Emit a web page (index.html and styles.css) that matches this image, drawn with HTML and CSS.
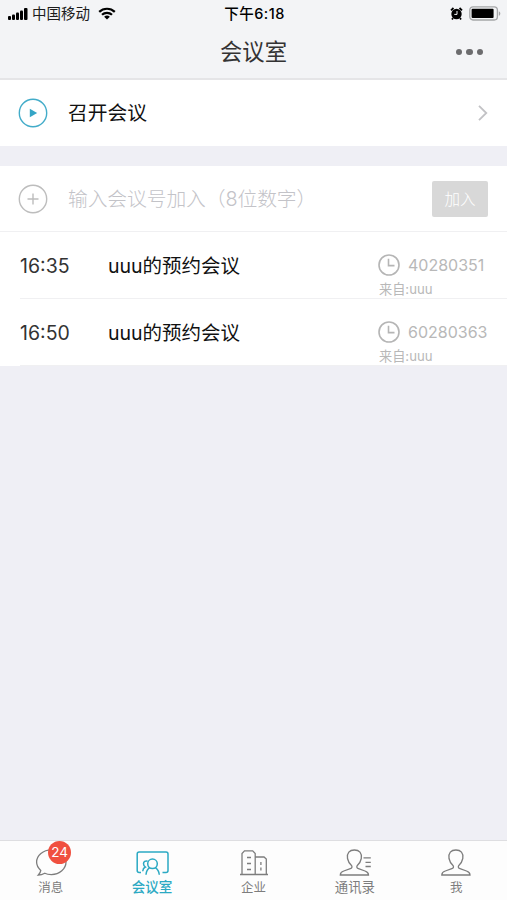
FILE: index.html
```html
<!DOCTYPE html>
<html lang="zh-CN">
<head>
  <meta charset="UTF-8">
  <meta name="viewport" content="width=device-width, initial-scale=1">
  <title>会议室</title>
  <link rel="stylesheet" href="styles.css">
</head>
<body>

<header>
  <div class="status-bar">
    <div class="carrier">
      <svg class="signal" width="20" height="12" viewBox="0 0 20 12">
        <rect x="0" y="8" width="3" height="4" rx="1"/>
        <rect x="4" y="6.5" width="3" height="5.5" rx="1"/>
        <rect x="8" y="4.5" width="3" height="7.5" rx="1"/>
        <rect x="12" y="2.5" width="3" height="9.5" rx="1"/>
        <rect x="16" y="0" width="3.5" height="12" rx="1"/>
      </svg>
      <span>中国移动</span>
      <svg class="wifi" width="18" height="13" viewBox="0 0 18 13">
        <path d="M1.2 4.9a11.2 11.2 0 0 1 15.6 0M4 7.8a7.2 7.2 0 0 1 10 0" fill="none" stroke="#000" stroke-width="2.2"/>
        <path d="M9 12.6L6.1 9.8a4.2 4.2 0 0 1 5.8 0z"/>
      </svg>
    </div>
    <div class="clock">下午6:18</div>
    <div class="power">
      <svg width="13" height="13" viewBox="0 0 13 13">
        <circle cx="6.5" cy="7" r="5.2"/>
        <path d="M1 3.4L3.5 1M12 3.4L9.5 1M3 11l-1 1.4M10 11l1 1.4" stroke="#000" stroke-width="1.8"/>
        <path d="M7 4v3.4H4.3" fill="none" stroke="#f3f4f6" stroke-width="1"/>
      </svg>
      <svg width="32" height="15" viewBox="0 0 32 15">
        <rect x=".8" y=".8" width="27.6" height="13.2" rx="3.2" fill="none" stroke="#a5a6a8" stroke-width="1.3"/>
        <rect x="2.6" y="2.7" width="22" height="9.4" rx="1"/>
        <path d="M29.800 5.2c2 .8 2 3.800 0 4.600z" fill="#a5a6a8"/>
      </svg>
    </div>
  </div>
  <div class="nav">
    <h1>会议室</h1>
    <div class="more"><i></i><i></i><i></i></div>
  </div>
</header>

<main>
  <div class="row start">
    <svg class="row-icon" width="30" height="30" viewBox="0 0 30 30">
      <circle cx="15" cy="15" r="13.7" fill="none" stroke="#43acc9" stroke-width="1.4"/>
      <path d="M11.8 10.7l7.4 4.2-7.4 4.3z" fill="#35a5c6"/>
    </svg>
    <span class="row-title">召开会议</span>
    <svg class="arrow" width="12" height="18" viewBox="0 0 12 18">
      <path d="M2 1.8L9.3 9 2 16.2" fill="none" stroke="#c2c2c5" stroke-width="1.8"/>
    </svg>
  </div>

  <div class="row join">
    <svg class="row-icon" width="30" height="30" viewBox="0 0 30 30">
      <g fill="none" stroke="#bdbdbd" stroke-width="1.4">
        <circle cx="15" cy="15" r="13.7"/>
        <path d="M9.5 15h11M15 9.5v11"/>
      </g>
    </svg>
    <span class="placeholder">输入会议号加入（8位数字）</span>
    <button class="join-btn">加入</button>
  </div>

  <div class="meeting-list">
    <div class="meeting">
      <span class="time">16:35</span>
      <span class="name">uuu的预约会议</span>
      <div class="info">
        <div class="number">
          <svg width="22" height="22" viewBox="0 0 22 22">
            <circle cx="11" cy="11" r="10"/>
            <path d="M10.5 4.8v6.8h6"/>
          </svg>
          <span>40280351</span>
        </div>
        <div class="from">来自:uuu</div>
      </div>
    </div>
    <div class="meeting">
      <span class="time">16:50</span>
      <span class="name">uuu的预约会议</span>
      <div class="info">
        <div class="number">
          <svg width="22" height="22" viewBox="0 0 22 22">
            <circle cx="11" cy="11" r="10"/>
            <path d="M10.5 4.8v6.8h6"/>
          </svg>
          <span>60280363</span>
        </div>
        <div class="from">来自:uuu</div>
      </div>
    </div>
  </div>
</main>

<nav class="tabs">
  <div class="tab">
    <svg width="36" height="30" viewBox="0 0 36 30">
      <path d="M7.8 23.4C4.9 20.9 3.6 18.2 3.6 15.1C3.6 8.4 10.1 2.8 18.4 2.8S33 8.4 33 15.1S26.7 27.6 18.4 27.6C15.9 27.6 13.6 27.2 11.8 26.2C9.8 27.3 7.6 28 5.3 28C6.8 26.6 7.6 25.2 7.8 23.4z"/>
    </svg>
    <span>消息</span>
    <b class="badge">24</b>
  </div>
  <div class="tab active">
    <svg width="36" height="30" viewBox="0 0 36 30">
      <path d="M7 25.6H5.200Q3.200 25.600 3.200 23.600V7Q3.200 5 5.200 5H32Q34 5 34 7V23.600Q34 25.600 32 25.600H28.500"/>
      <circle cx="18.5" cy="16.8" r="4.8"/>
      <path d="M12 27.700C12.200 24.700 13.300 22.300 15.600 20.700M21.400 20.700C23.800 22.300 25 24.700 25.300 27.700M13.600 14.200C11.300 13.500 9.500 14.800 9.500 16.800C9.500 18.300 10.200 19.200 11.400 20C9.600 20.800 8.900 22 8.700 24.200"/>
    </svg>
    <span>会议室</span>
  </div>
  <div class="tab">
    <svg width="36" height="30" viewBox="0 0 36 30">
      <path d="M4 27.5H32M6 27.5V6.5L8.500 3.800H16.700L19.200 6.500V27.500M19.200 10H28L30.300 12V27.500M11 10.500h4M11 16.500h4M11 22.500h4M24.900 15v3M24.900 20.500v3"/>
    </svg>
    <span>企业</span>
  </div>
  <div class="tab">
    <svg width="36" height="30" viewBox="0 0 36 30">
      <path d="M14.7 18.8C11.6 16 10.9 13.5 10.5 11.5C9.7 6 12.5 3 17.4 3S25.1 6 24.3 11.5C23.9 13.5 23.2 16 20.1 18.8C19.4 20.2 20.1 21.2 21.5 21.7L28 24Q31.5 25.2 31.5 28H3.3Q3.3 25.2 6.8 24L13.3 21.7C14.7 21.2 15.4 20.2 14.7 18.8z"/>
      <path d="M26.5 10.8h7.3M28.5 15.3h5.3M28.5 19.5h5.3"/>
    </svg>
    <span>通讯录</span>
  </div>
  <div class="tab">
    <svg width="36" height="30" viewBox="0 0 36 30">
      <path d="M15.2 18.8C12.1 16 11.4 13.5 11 11.5C10.2 6 13 3 17.9 3S25.6 6 24.8 11.5C24.4 13.5 23.7 16 20.6 18.8C19.9 20.2 20.6 21.2 22 21.7L28.5 24Q32 25.2 32 28H3.8Q3.8 25.2 7.3 24L13.8 21.7C15.2 21.2 15.9 20.2 15.2 18.8z"/>
    </svg>
    <span>我</span>
  </div>
</nav>

</body>
</html>
```
FILE: styles.css
```css
* {
  box-sizing: border-box;
}

body {
  margin: 0;
  height: 100vh;
  display: flex;
  flex-direction: column;
  overflow: hidden;
  background: #efeff5;
  color: #1c1c1c;
  font-family: Inter, "Noto Sans CJK SC", sans-serif;
}

svg {
  display: block;
  flex: none;
}

/* Header */
header {
  height: 80px;
  background: #f3f4f6;
  border-bottom: 2px solid #e5e5e7;
}

.status-bar {
  height: 26px;
  padding: 0 6px 0 8px;
  display: grid;
  grid-template-columns: 1fr auto 1fr;
  align-items: center;
  font-size: 14.5px;
  line-height: 26px;
}

.carrier {
  display: flex;
  align-items: center;
}

.carrier span {
  margin: 0 8px 0 4px;
  padding-top: 1px;
}

.clock {
  padding-top: 1px;
  font-size: 14.5px;
  font-weight: 500;
  letter-spacing: 0.5px;
  color: #000;
}

.power {
  display: flex;
  justify-content: flex-end;
  align-items: center;
  gap: 6px;
}

.nav {
  height: 52px;
  padding: 0 24px;
  display: grid;
  grid-template-columns: 1fr auto 1fr;
  align-items: center;
}

.nav h1 {
  grid-column: 2;
  margin: 0;
  font-size: 22.3px;
  font-weight: 400;
  line-height: 52px;
  color: #333;
}

.more {
  display: flex;
  justify-content: flex-end;
  gap: 4px;
}

.more i {
  width: 6.5px;
  height: 6.5px;
  border-radius: 50%;
  background: #6c6c6e;
}

/* Rows */
main {
  flex: 1;
}

.row {
  height: 66px;
  padding: 0 18px;
  display: flex;
  align-items: center;
  background: #fff;
}

.row-title,
.placeholder {
  flex: 1;
  margin-left: 20px;
  padding-bottom: 3px;
  font-size: 19.8px;
}

.row-title {
  color: #111;
}

.placeholder {
  color: #c3c3c8;
  font-weight: 300;
  letter-spacing: -0.1px;
}

.join {
  margin-top: 20px;
  padding-right: 19px;
  border-bottom: 1px solid #f0f0f2;
}

.join-btn {
  width: 56px;
  height: 36px;
  padding: 0 0 2px;
  border: 0;
  border-radius: 2px;
  background: #d8d8d8;
  color: #fff;
  font: 300 15.5px Inter, "Noto Sans CJK SC", sans-serif;
}

/* Meetings */
.meeting-list {
  background: #fff;
}

.meeting {
  height: 67px;
  margin-left: 20px;
  display: flex;
  align-items: center;
  border-bottom: 1px solid #f0f0f2;
}

.time {
  width: 88px;
  padding-top: 2px;
  font-size: 19.5px;
  color: #333;
}

.name {
  flex: 1;
  padding-bottom: 2px;
  font-size: 19.5px;
  color: #111;
}

.info {
  width: 129px;
  align-self: flex-end;
  color: #b8b8b8;
}

.number {
  height: 22px;
  display: flex;
  align-items: center;
  gap: 8px;
  font-size: 16px;
}

.number svg {
  fill: none;
  stroke: #b5b5b5;
  stroke-width: 1.6;
}

.from {
  height: 22px;
  padding-left: 1px;
  font-size: 13.2px;
  line-height: 26px;
}

/* Tab bar */
.tabs {
  height: 60px;
  display: flex;
  background: #fdfdfd;
  border-top: 1px solid #dedee1;
}

.tab {
  flex: 1;
  position: relative;
  display: flex;
  flex-direction: column;
  align-items: center;
  padding-top: 6px;
  font-size: 12.5px;
  line-height: 21px;
  color: #7d7d7d;
}

.tab:nth-child(4) {
  font-size: 13.4px;
}

.tab svg {
  fill: none;
  stroke: #7d7d7d;
  stroke-width: 1.3;
}

.tab.active {
  color: #2ba9c3;
  font-size: 13.5px;
  font-weight: 500;
}

.tab.active svg {
  stroke: #2ba9c3;
  stroke-width: 1.5;
}

.badge {
  position: absolute;
  top: 0;
  left: 48px;
  width: 23px;
  height: 23px;
  border-radius: 50%;
  background: #f0503f;
  color: #fff;
  font-size: 13.5px;
  font-weight: 400;
  line-height: 23px;
  text-align: center;
}
```
